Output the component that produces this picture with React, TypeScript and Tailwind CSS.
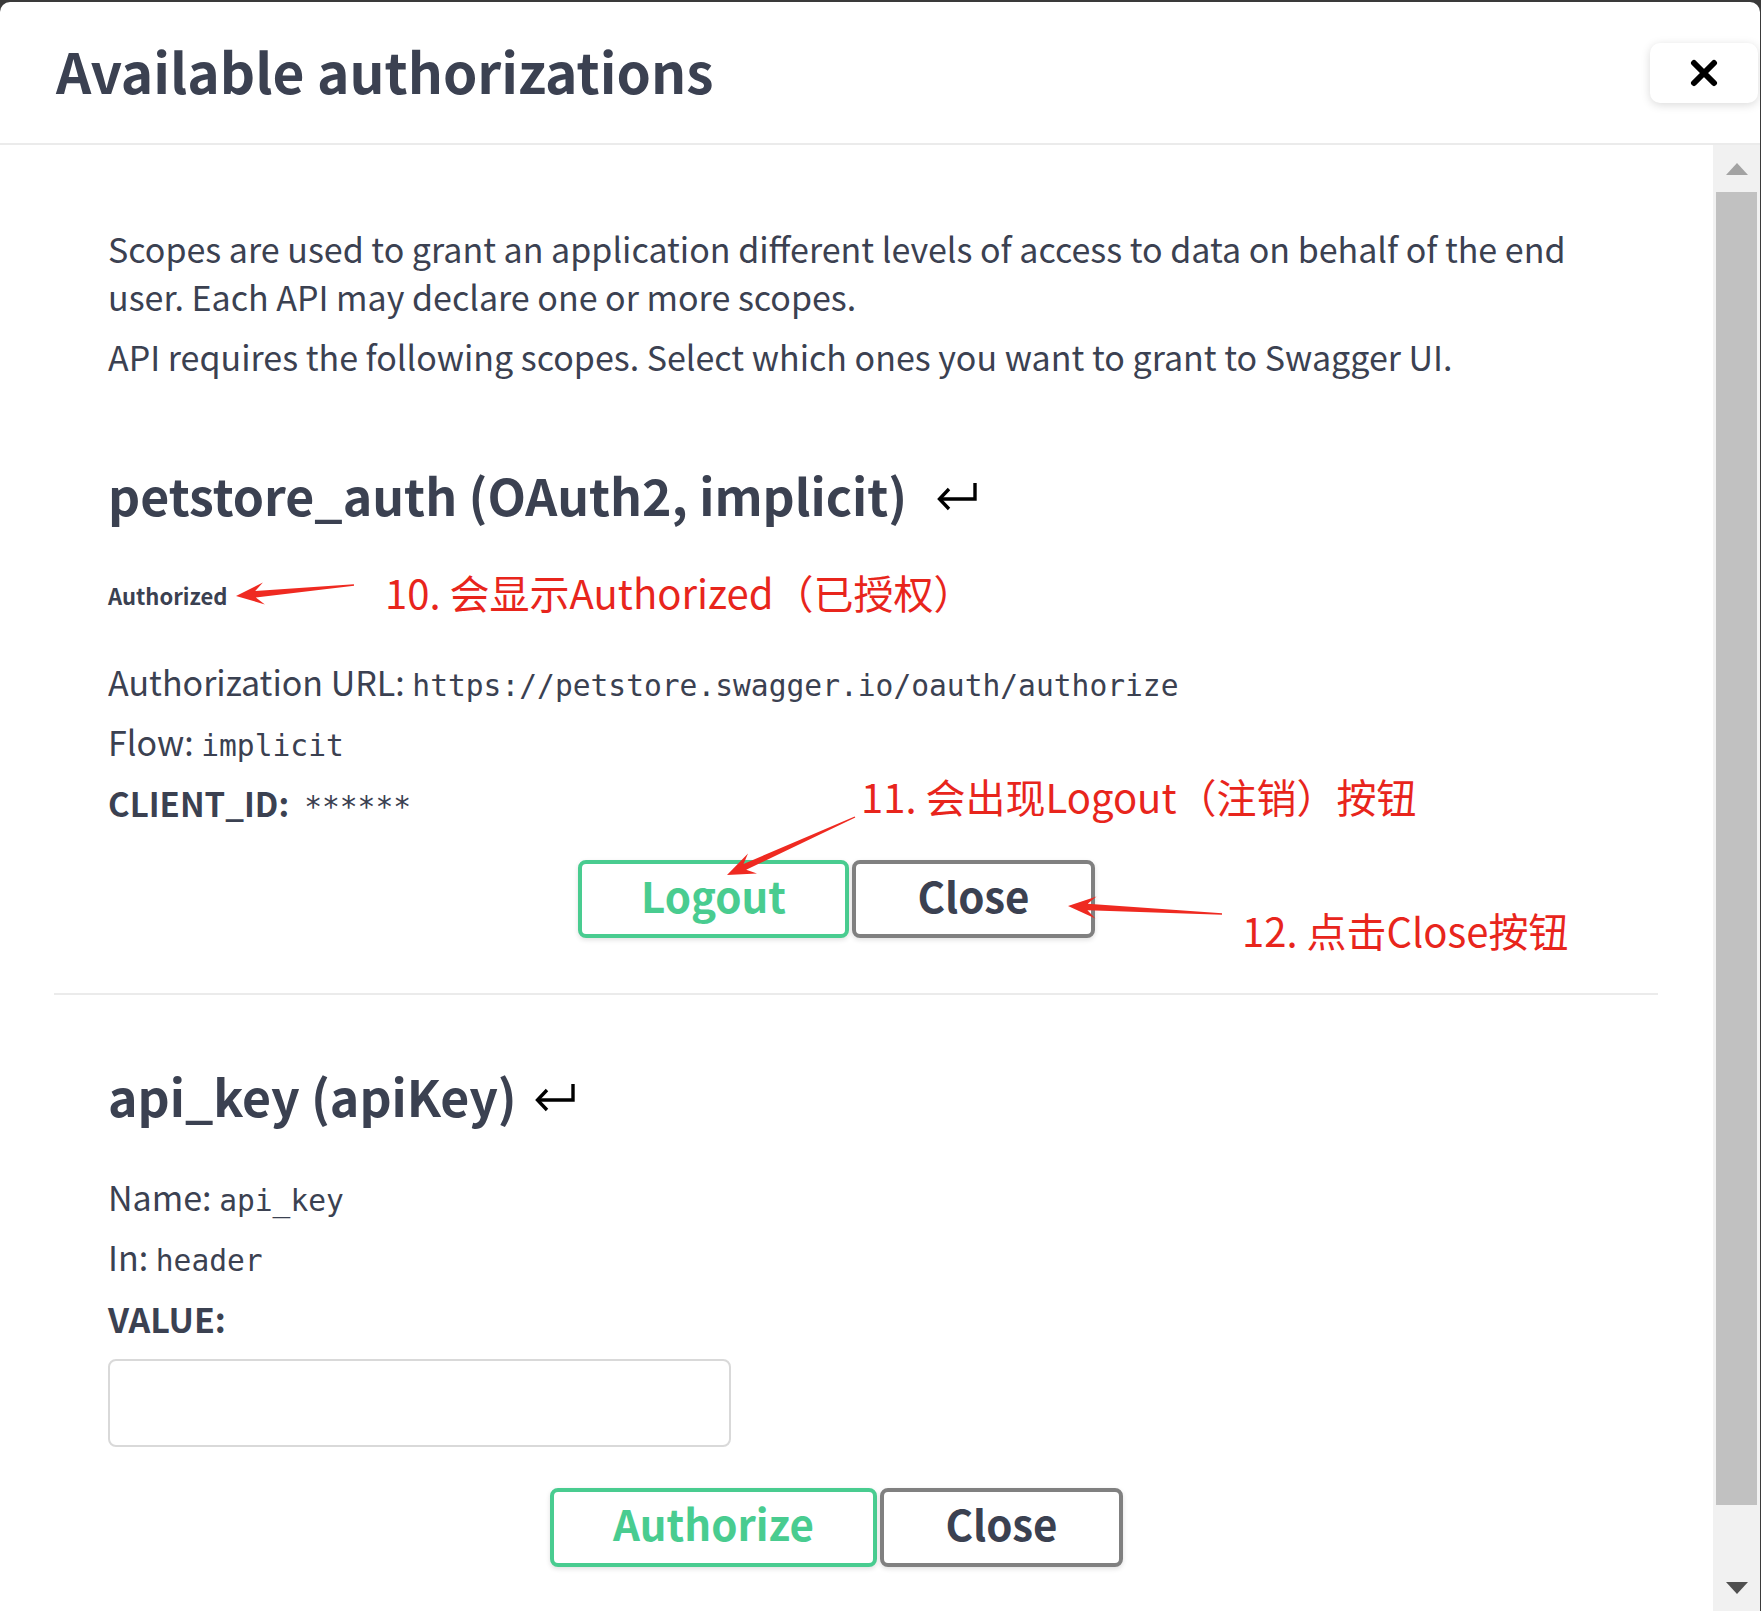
import React from "react";

type Pt = [number, number];

function arrowPoints(x1: number, y1: number, x2: number, y2: number, H = 28, W = 11, s = 3.2): string {
  const dx = x2 - x1;
  const dy = y2 - y1;
  const L = Math.hypot(dx, dy);
  const ux = dx / L;
  const uy = dy / L;
  const nx = -uy;
  const ny = ux;
  const bx = x2 - ux * H;
  const by = y2 - uy * H;
  const cx = x2 - ux * H * 0.7;
  const cy = y2 - uy * H * 0.7;
  const pts: Pt[] = [
    [x1 + nx * 0.7, y1 + ny * 0.7],
    [cx + nx * s, cy + ny * s],
    [bx + nx * W, by + ny * W],
    [x2, y2],
    [bx - nx * W, by - ny * W],
    [cx - nx * s, cy - ny * s],
    [x1 - nx * 0.7, y1 - ny * 0.7],
  ];
  return pts.map((p) => `${p[0].toFixed(1)},${p[1].toFixed(1)}`).join(" ");
}

function ReturnArrow({ ml }: { ml: string }) {
  return (
    <svg width="44" height="34" viewBox="0 0 44 34" className={ml + " shrink-0"}>
      <path d="M40 6 V22 H5" fill="none" stroke="#000" strokeWidth="3.4" />
      <path d="M14 12 L4.5 22 L14 32" fill="none" stroke="#000" strokeWidth="3.4" />
    </svg>
  );
}

function Btn({ w, h, green, children }: { w: string; h: string; green?: boolean; children: React.ReactNode }) {
  return (
    <div
      className={
        (green ? "border-[#49cc90] text-[#49cc90] " : "border-[#808080] text-[#3b4151] ") +
        w +
        " " +
        h +
        " flex items-center justify-center rounded-[8px] border-[4px] bg-white pb-[10px] font-bold text-[42px] shadow-[0_2px_5px_rgba(0,0,0,0.12)]"
      }
    >
      {children}
    </div>
  );
}

export default function App() {
  return (
    <div className="relative w-[1761px] h-[1611px] overflow-hidden bg-[#3a3a3a] pt-[2px] font-['Noto_Sans_CJK_SC','Noto_Sans',sans-serif] text-[#3b4151]">
      <div className="flex h-[1609px] w-[1760px] flex-col overflow-hidden rounded-t-[10px] bg-white">
        {/* header */}
        <div className="flex h-[143px] shrink-0 items-center justify-between border-b-[2px] border-[#ebebeb] pl-[56px] pr-[2px]">
          <h2 className="pb-[4px] text-[55px] font-bold leading-none whitespace-nowrap">Available authorizations</h2>
          <div className="flex h-[60px] w-[108px] items-center justify-center rounded-[10px] bg-white shadow-[0_2px_10px_rgba(0,0,0,0.15)]">
            <svg width="28" height="28" viewBox="0 0 28 28">
              <path d="M4 4 L24 24 M24 4 L4 24" stroke="#000" strokeWidth="6" strokeLinecap="round" />
            </svg>
          </div>
        </div>

        {/* body */}
        <div className="flex min-h-0 flex-1">
          <div className="min-w-0 flex-1 overflow-hidden pl-[54px] pr-[55px]">
            {/* section 1 */}
            <div className="pl-[54px] pr-[93px] pt-[80px] pb-[55px]">
              <p className="text-[34px] leading-[48px] whitespace-nowrap">
                Scopes are used to grant an application different levels of access to data on behalf of the end
                <br />
                user. Each API may declare one or more scopes.
              </p>
              <p className="mt-[12px] text-[34px] leading-[48px] whitespace-nowrap">
                API requires the following scopes. Select which ones you want to grant to Swagger UI.
              </p>
              <div className="mt-[86px] flex h-[60px] items-center pb-[6px]">
                <h4 className="text-[50px] font-bold whitespace-nowrap">petstore_auth (OAuth2, implicit)</h4>
                <ReturnArrow ml="ml-[28px]" />
              </div>
              <div className="mt-[48px] flex h-[40px] items-center">
                <h6 className="text-[22px] font-bold">Authorized</h6>
              </div>
              <p className="mt-[39px] h-[60px] overflow-hidden text-[34px] leading-[56px] whitespace-nowrap">
                Authorization URL:&nbsp;
                <code className="font-['DejaVu_Sans_Mono',monospace] text-[29.6px] leading-none">https://petstore.swagger.io/oauth/authorize</code>
              </p>
              <p className="h-[60px] overflow-hidden text-[34px] leading-[56px] whitespace-nowrap">
                Flow:&nbsp;
                <code className="font-['DejaVu_Sans_Mono',monospace] text-[29.6px] leading-none">implicit</code>
              </p>
              <p className="h-[60px] overflow-hidden text-[34px] leading-[58px] whitespace-nowrap">
                <span className="text-[33px] font-bold">CLIENT_ID:&nbsp;&nbsp;</span>
                <code className="font-['DejaVu_Sans_Mono',monospace] text-[29.6px] leading-none">******</code>
              </p>
              <div className="mt-[26px] flex justify-center gap-[3px]">
                <Btn w="w-[271px]" h="h-[78px]" green>
                  Logout
                </Btn>
                <Btn w="w-[243px]" h="h-[78px]">
                  Close
                </Btn>
              </div>
            </div>
            <div className="h-[2px] bg-[#ebebeb]" />
            {/* section 2 */}
            <div className="pl-[54px] pr-[93px] pt-[73px]">
              <div className="flex h-[60px] items-center pb-[6px]">
                <h4 className="text-[50px] font-bold whitespace-nowrap">api_key (apiKey)</h4>
                <ReturnArrow ml="ml-[16px]" />
              </div>
              <p className="mt-[41px] h-[60px] overflow-hidden text-[34px] leading-[56px] whitespace-nowrap">
                Name:&nbsp;
                <code className="font-['DejaVu_Sans_Mono',monospace] text-[29.6px] leading-none">api_key</code>
              </p>
              <p className="h-[60px] overflow-hidden text-[34px] leading-[56px] whitespace-nowrap">
                In:&nbsp;
                <code className="font-['DejaVu_Sans_Mono',monospace] text-[29.6px] leading-none">header</code>
              </p>
              <p className="h-[60px] text-[34px] font-bold leading-[60px]">VALUE:</p>
              <div className="mt-[10px] h-[88px] w-[623px] rounded-[8px] border-[2px] border-[#d9d9d9] bg-white" />
              <div className="mt-[41px] flex justify-center gap-[3px]">
                <Btn w="w-[327px]" h="h-[79px]" green>
                  Authorize
                </Btn>
                <Btn w="w-[243px]" h="h-[79px]">
                  Close
                </Btn>
              </div>
            </div>
          </div>

          {/* scrollbar */}
          <div className="flex w-[47px] shrink-0 flex-col bg-[#f1f1f1]">
            <div className="flex h-[47px] items-center justify-center">
              <svg width="22" height="12" viewBox="0 0 22 12">
                <path d="M11 0 L22 12 H0 Z" fill="#a3a3a3" />
              </svg>
            </div>
            <div className="mx-[3px] h-[1313px] bg-[#c1c1c1]" />
            <div className="flex-1" />
            <div className="flex h-[47px] items-center justify-center">
              <svg width="22" height="12" viewBox="0 0 22 12">
                <path d="M0 0 H22 L11 12 Z" fill="#505050" />
              </svg>
            </div>
          </div>
        </div>
      </div>

      {/* annotations */}
      <svg className="pointer-events-none absolute left-0 top-0" width="1761" height="1611">
        <polygon points={arrowPoints(354, 585, 236, 596)} fill="#ef2a21" />
        <polygon points={arrowPoints(855, 817, 727, 875)} fill="#ef2a21" />
        <polygon points={arrowPoints(1222, 914, 1068, 906)} fill="#ef2a21" />
      </svg>
      <div className="absolute left-[385px] top-[567px] whitespace-nowrap text-[40px] leading-[50px] text-[#e8251c]">
        10. 会显示Authorized（已授权）
      </div>
      <div className="absolute left-[861px] top-[771px] whitespace-nowrap text-[40px] leading-[50px] text-[#e8251c]">
        11. 会出现Logout（注销）按钮
      </div>
      <div className="absolute left-[1242px] top-[905px] whitespace-nowrap text-[40px] leading-[50px] text-[#e8251c]">
        12. 点击Close按钮
      </div>
    </div>
  );
}
